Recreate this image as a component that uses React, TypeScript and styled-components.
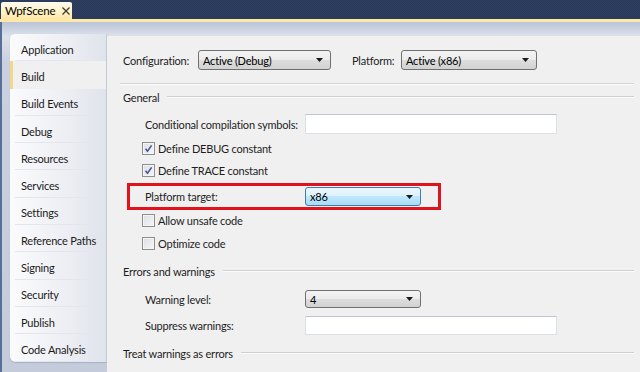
import React from "react";
import styled, { createGlobalStyle, css } from "styled-components";

const GlobalStyle = createGlobalStyle`
  html, body {
    margin: 0;
    padding: 0;
    background: #2c3c5c;
  }
`;

const Root = styled.div`
  width: 640px;
  height: 372px;
  display: flex;
  flex-direction: column;
  overflow: hidden;
  font-family: Lato, "Liberation Sans", sans-serif;
  font-size: 11px;
  letter-spacing: -0.2px;
  color: #1e1e1e;
  background-color: #2c3c5c;
  background-image: repeating-conic-gradient(#2f4062 0 25%, #293857 0 50%);
  background-size: 2px 2px;
`;

const TabStrip = styled.div`
  height: 19px;
  display: flex;
  align-items: flex-end;
  padding-left: 1px;
`;

const DocTab = styled.div`
  width: 71px;
  height: 17px;
  box-sizing: border-box;
  display: flex;
  align-items: center;
  gap: 7px;
  padding-left: 4px;
  border-radius: 2px 2px 0 0;
  background: linear-gradient(#fffcee, #fff2c4 60%, #ffe8a6);
  color: #000;
  font-size: 11.5px;
  svg {
    flex-shrink: 0;
  }
`;

const YellowLine = styled.div`
  height: 3px;
  background: #ffe8a6;
`;

const Workspace = styled.div`
  flex: 1;
  display: flex;
  align-items: flex-start;
  padding: 12px 0 0 8px;
  border-left: 2px solid #5a6e97;
  background: linear-gradient(#b9c4d8, #cdd4e2 8px, #dde1ea 14px, #c9d0df 40px, #c4ccdc);
`;

const Sidebar = styled.nav`
  width: 97px;
  box-sizing: border-box;
  display: flex;
  flex-direction: column;
  border-radius: 5px 0 0 6px;
  border-right: 1px solid #c3c9d5;
  background: linear-gradient(to right, #fbfbfc, #eceef3 60%, #dfe3eb);
  box-shadow: 0 1px 1px rgba(80, 95, 130, 0.25);
  overflow: hidden;
`;

const SideItem = styled.div<{ $active?: boolean }>`
  position: relative;
  height: 27.3px;
  box-sizing: border-box;
  display: flex;
  align-items: center;
  padding: 3px 0 0 11px;
  color: #1b1b1b;
  &::after {
    content: "";
    position: absolute;
    left: 5px;
    right: 14px;
    bottom: 0;
    height: 1px;
    background: #e3e6ec;
  }
  ${(p) =>
    p.$active &&
    css`
      background: #f0f0f0;
      border-left: 3px solid #f6d489;
      padding-left: 8px;
      margin-right: -1px;
      &::after {
        display: none;
      }
    `}
`;

const Content = styled.main`
  flex: 1;
  align-self: stretch;
  margin-top: 2px;
  padding: 14px 6px 0 16px;
  display: flex;
  flex-direction: column;
  background: #f0f0f0;
`;

const ConfigRow = styled.div`
  height: 20px;
  display: flex;
  align-items: center;
`;

const InlineLabel = styled.span<{ $w: number; $ml?: number }>`
  width: ${(p) => p.$w}px;
  margin-left: ${(p) => p.$ml ?? 0}px;
  white-space: nowrap;
`;

const Separator = styled.div`
  margin: 13px 0 0 -3px;
  height: 0;
  border-top: 1px solid #d3d3d3;
  border-bottom: 1px solid #ffffff;
`;

const SectionHeader = styled.div<{ $mt: number }>`
  margin-top: ${(p) => p.$mt}px;
  height: 14px;
  display: flex;
  align-items: center;
  gap: 8px;
  white-space: nowrap;
  &::after {
    content: "";
    flex: 1;
    height: 0;
    border-top: 1px solid #d0d0d0;
    border-bottom: 1px solid #fbfbfb;
  }
`;

const FormRow = styled.div<{ $mt: number; $h: number }>`
  margin-top: ${(p) => p.$mt}px;
  height: ${(p) => p.$h}px;
  display: grid;
  grid-template-columns: 160px auto;
  align-items: center;
  padding-left: 22px;
`;

const HighlightRow = styled.div`
  margin: 4px 0 0 4px;
  width: 314px;
  height: 27px;
  box-sizing: border-box;
  border: 3px solid #e0121c;
  padding-left: 15px;
  display: grid;
  grid-template-columns: 160px auto;
  align-items: center;
`;

const CheckRow = styled.label<{ $mt: number }>`
  margin-top: ${(p) => p.$mt}px;
  height: 18px;
  display: flex;
  align-items: center;
  gap: 3px;
  padding-left: 19px;
`;

const CheckBox = styled.span`
  width: 13px;
  height: 13px;
  box-sizing: border-box;
  border: 1px solid #8e8f8f;
  background: linear-gradient(135deg, #dcdee3, #f7f7f8);
  box-shadow: inset 0 0 0 1px #f4f4f4;
  display: flex;
  align-items: center;
  justify-content: center;
`;

const Combo = styled.div<{ $w: number; $h?: number; $hot?: boolean }>`
  width: ${(p) => p.$w}px;
  height: ${(p) => p.$h ?? 20}px;
  box-sizing: border-box;
  display: flex;
  align-items: center;
  justify-content: space-between;
  padding: 0 7px 0 4px;
  border: 1px solid #707070;
  border-radius: 3px;
  background: linear-gradient(#f3f3f3, #ebebeb 50%, #dddddd 50%, #d2d2d2);
  color: #000;
  white-space: nowrap;
  ${(p) =>
    p.$hot &&
    css`
      border-color: #3c7fb1;
      background: linear-gradient(#ebf7fd, #dcf1fc 50%, #c0e7fc 50%, #a9dbf6);
    `}
`;

const TextBox = styled.div<{ $h?: number }>`
  width: 252px;
  height: ${(p) => p.$h ?? 20}px;
  box-sizing: border-box;
  background: #ffffff;
  border: 1px solid #dbdfe6;
  border-top-color: #c0c4cc;
`;

const Arrow = () => (
  <svg width="7" height="4" viewBox="0 0 7 4">
    <path d="M0 0H7L3.5 4Z" fill="#1a1a1a" />
  </svg>
);

const Check = () => (
  <svg width="9" height="9" viewBox="0 0 9 9">
    <path
      d="M1.5 4.8 L3.5 7.2 L7.6 1.4"
      fill="none"
      stroke="#44599a"
      strokeWidth="1.6"
    />
  </svg>
);

const CloseX = () => (
  <svg width="8" height="8" viewBox="0 0 8 8">
    <path d="M0.5 0.5L7.5 7.5M7.5 0.5L0.5 7.5" stroke="#3d3d33" strokeWidth="1.3" />
  </svg>
);

const pages = [
  "Application",
  "Build",
  "Build Events",
  "Debug",
  "Resources",
  "Services",
  "Settings",
  "Reference Paths",
  "Signing",
  "Security",
  "Publish",
  "Code Analysis",
];

export default function App() {
  return (
    <Root>
      <GlobalStyle />
      <TabStrip>
        <DocTab>
          <span>WpfScene</span>
          <CloseX />
        </DocTab>
      </TabStrip>
      <YellowLine />
      <Workspace>
        <Sidebar>
          {pages.map((p) => (
            <SideItem key={p} $active={p === "Build"}>
              {p}
            </SideItem>
          ))}
        </Sidebar>
        <Content>
          <ConfigRow>
            <InlineLabel $w={75}>Configuration:</InlineLabel>
            <Combo $w={133}>
              <span>Active (Debug)</span>
              <Arrow />
            </Combo>
            <InlineLabel $w={49} $ml={21}>
              Platform:
            </InlineLabel>
            <Combo $w={136}>
              <span>Active (x86)</span>
              <Arrow />
            </Combo>
          </ConfigRow>
          <Separator />

          <SectionHeader $mt={5}>General</SectionHeader>
          <FormRow $mt={10} $h={20}>
            <span>Conditional compilation symbols:</span>
            <TextBox />
          </FormRow>
          <CheckRow $mt={5}>
            <CheckBox>
              <Check />
            </CheckBox>
            Define DEBUG constant
          </CheckRow>
          <CheckRow $mt={4}>
            <CheckBox>
              <Check />
            </CheckBox>
            Define TRACE constant
          </CheckRow>
          <HighlightRow>
            <span>Platform target:</span>
            <Combo $w={116} $h={19} $hot>
              <span>x86</span>
              <Arrow />
            </Combo>
          </HighlightRow>
          <CheckRow $mt={1}>
            <CheckBox />
            Allow unsafe code
          </CheckRow>
          <CheckRow $mt={5}>
            <CheckBox />
            Optimize code
          </CheckRow>

          <SectionHeader $mt={12}>Errors and warnings</SectionHeader>
          <FormRow $mt={12} $h={18}>
            <span>Warning level:</span>
            <Combo $w={116} $h={18}>
              <span>4</span>
              <Arrow />
            </Combo>
          </FormRow>
          <FormRow $mt={8} $h={19}>
            <span>Suppress warnings:</span>
            <TextBox $h={19} />
          </FormRow>
          <SectionHeader $mt={11}>Treat warnings as errors</SectionHeader>
        </Content>
      </Workspace>
    </Root>
  );
}
